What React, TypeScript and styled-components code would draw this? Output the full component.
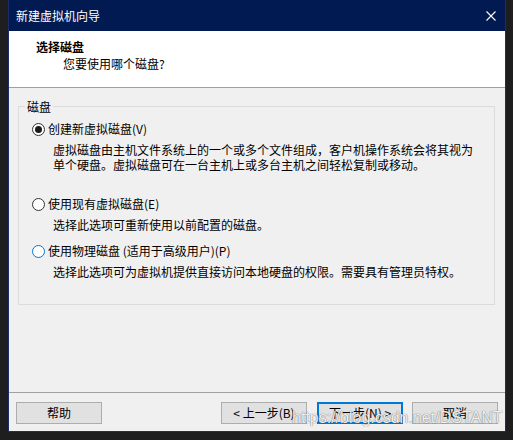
import React from "react";
import styled, { createGlobalStyle, css } from "styled-components";

const Global = createGlobalStyle`
  html, body { margin: 0; padding: 0; background: #1e1e1e; }
  body {
    font-family: "Noto Sans CJK SC", "Microsoft YaHei", sans-serif;
    font-size: 12px;
    color: #000;
  }
  * { box-sizing: border-box; }
`;

const Window = styled.div`
  position: relative;
  margin-left: 8px;
  width: 498px;
  height: 432px;
  display: flex;
  flex-direction: column;
  background: #f0f0f0;
  border: 1px solid #1d2d6a;
  border-top: none;
`;

const TitleBar = styled.div`
  height: 31px;
  flex: none;
  display: flex;
  align-items: center;
  justify-content: space-between;
  padding: 0 9px 0 7px;
  background: #011a52;
  color: #fff;
  font-size: 12px;
  line-height: 16px;
`;

const CloseIcon = styled.svg`
  display: block;
  width: 10px;
  height: 10px;
`;

const Header = styled.div`
  height: 57px;
  flex: none;
  background: #fff;
  border-bottom: 1px solid #a0a0a0;
  padding: 8px 0 0 27px;
`;

const HeaderTitle = styled.div`
  font-weight: 700;
  line-height: 16px;
`;

const HeaderSub = styled.div`
  margin: 1px 0 0 27px;
  line-height: 16px;
`;

const Body = styled.div`
  flex: 1;
  padding: 18px 10px 0 9px;
`;

const GroupBox = styled.div`
  position: relative;
  height: 199px;
  border: 1px solid #dcdcdc;
  padding: 14px 0 0 13px;
`;

const Caption = styled.span`
  position: absolute;
  top: -8px;
  left: 6px;
  padding: 0 2px;
  background: #f0f0f0;
  line-height: 16px;
`;

const Option = styled.div<{ $gap: number }>`
  margin-top: ${(p) => p.$gap}px;
`;

const OptionRow = styled.div`
  display: flex;
  align-items: center;
  gap: 3px;
  height: 16px;
  line-height: 16px;
`;

const Radio = styled.span<{ $checked?: boolean; $focus?: boolean }>`
  position: relative;
  flex: none;
  width: 13px;
  height: 13px;
  border-radius: 50%;
  background: #fff;
  border: 1px solid ${(p) => (p.$focus ? "#0078d7" : "#333")};
  ${(p) =>
    p.$checked &&
    css`
      &::after {
        content: "";
        position: absolute;
        left: 2px;
        top: 2px;
        width: 7px;
        height: 7px;
        border-radius: 50%;
        background: #1a1a1a;
      }
    `}
`;

const Mnemonic = styled.span`
  color: #000;
`;

const Desc = styled.div`
  margin: 5px 0 0 21px;
  line-height: 15px;
`;

const Footer = styled.div`
  height: 39px;
  flex: none;
  border-top: 1px solid #a0a0a0;
  display: flex;
  align-items: flex-start;
  padding: 9px 7px 0 7px;
`;

const Spacer = styled.div`
  flex: 1;
`;

const Button = styled.button<{ $default?: boolean; $ml?: number }>`
  width: 86px;
  height: 22px;
  margin: 0 0 0 ${(p) => p.$ml ?? 0}px;
  padding: 0;
  font: inherit;
  font-size: 12px;
  line-height: 18px;
  color: #000;
  background: #e1e1e1;
  border: 1px solid #adadad;
  ${(p) =>
    p.$default &&
    css`
      border-color: #0078d7;
      box-shadow: inset 0 0 0 1px #0078d7;
    `}
`;

const Watermark = styled.span`
  position: absolute;
  left: 283px;
  top: 410px;
  font-family: "Liberation Sans", Arial, sans-serif;
  font-size: 16px;
  line-height: 16px;
  color: rgba(255, 255, 255, 0.92);
  text-shadow: 0 0 1px rgba(0, 0, 0, 0.5), 0 0 1px rgba(0, 0, 0, 0.3);
  white-space: nowrap;
  pointer-events: none;
`;

export default function App() {
  return (
    <>
      <Global />
      <Window>
        <TitleBar>
          <span>新建虚拟机向导</span>
          <CloseIcon viewBox="0 0 10 10">
            <path d="M0.5 0.5 L9.5 9.5 M9.5 0.5 L0.5 9.5" stroke="#fff" strokeWidth="1.1" />
          </CloseIcon>
        </TitleBar>
        <Header>
          <HeaderTitle>选择磁盘</HeaderTitle>
          <HeaderSub>您要使用哪个磁盘?</HeaderSub>
        </Header>
        <Body>
          <GroupBox>
            <Caption>磁盘</Caption>
            <Option $gap={0}>
              <OptionRow>
                <Radio $checked />
                <span>
                  创建新虚拟磁盘<Mnemonic>(V)</Mnemonic>
                </span>
              </OptionRow>
              <Desc>
                虚拟磁盘由主机文件系统上的一个或多个文件组成，客户机操作系统会将其视为
                <br />
                单个硬盘。虚拟磁盘可在一台主机上或多台主机之间轻松复制或移动。
              </Desc>
            </Option>
            <Option $gap={24}>
              <OptionRow>
                <Radio />
                <span>
                  使用现有虚拟磁盘<Mnemonic>(E)</Mnemonic>
                </span>
              </OptionRow>
              <Desc>选择此选项可重新使用以前配置的磁盘。</Desc>
            </Option>
            <Option $gap={11}>
              <OptionRow>
                <Radio $focus />
                <span>
                  使用物理磁盘 (适用于高级用户)<Mnemonic>(P)</Mnemonic>
                </span>
              </OptionRow>
              <Desc>选择此选项可为虚拟机提供直接访问本地硬盘的权限。需要具有管理员特权。</Desc>
            </Option>
          </GroupBox>
        </Body>
        <Footer>
          <Button>帮助</Button>
          <Spacer />
          <Button>&lt; 上一步(B)</Button>
          <Button $default $ml={10}>
            下一步(N) &gt;
          </Button>
          <Button $ml={9}>取消</Button>
        </Footer>
        <Watermark>https://blog.csdn.net/DSTANT</Watermark>
      </Window>
    </>
  );
}
